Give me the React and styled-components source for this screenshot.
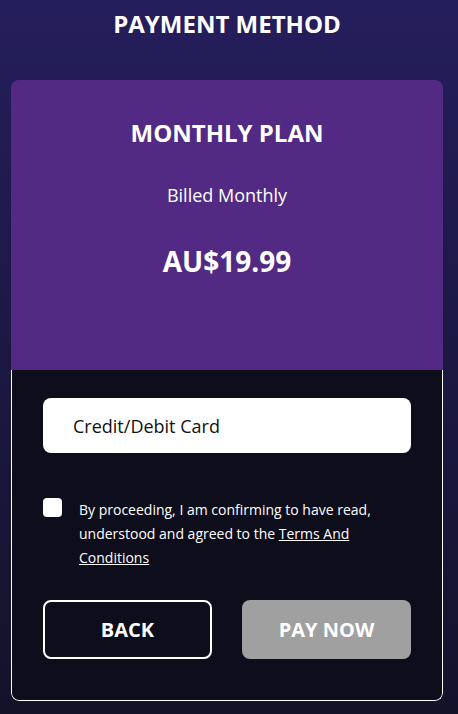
import styled, { createGlobalStyle } from 'styled-components';

const GlobalStyle = createGlobalStyle`
  html, body {
    margin: 0;
    padding: 0;
  }
  body {
    font-family: "Open Sans", "Liberation Sans", sans-serif;
    background: linear-gradient(180deg, #251e5c 0%, #1c1843 50%, #141229 100%);
    min-height: 714px;
    color: #fff;
  }
`;

const Page = styled.div`
  width: 458px;
  min-height: 714px;
  box-sizing: border-box;
  padding: 0 15px 15px 11px;
  display: flex;
  flex-direction: column;
`;

const Heading = styled.h1`
  margin: 0;
  height: 80px;
  padding-top: 7px;
  box-sizing: border-box;
  font-size: 24px;
  font-weight: 700;
  line-height: 34px;
  text-align: center;
`;

const Card = styled.div`
  border-radius: 8px;
  overflow: hidden;
  display: flex;
  flex-direction: column;
`;

const PlanPanel = styled.div`
  background: #522a84;
  height: 290px;
  display: flex;
  flex-direction: column;
  align-items: center;
  padding-top: 37px;
  box-sizing: border-box;
`;

const PlanName = styled.div`
  font-size: 24px;
  font-weight: 700;
  line-height: 32px;
`;

const Billing = styled.div`
  margin-top: 33px;
  font-size: 18px;
  line-height: 26px;
`;

const Price = styled.div`
  margin-top: 34px;
  font-size: 28px;
  font-weight: 700;
  line-height: 38px;
`;

const FormPanel = styled.div`
  background: #0e0d1b;
  border: 1px solid #ffffff;
  border-top: none;
  border-radius: 0 0 8px 8px;
  padding: 28px 31px 41px;
  display: flex;
  flex-direction: column;
`;

const MethodSelect = styled.div`
  background: #fff;
  color: #111;
  height: 55px;
  border-radius: 8px;
  display: flex;
  align-items: center;
  padding-left: 30px;
  font-size: 18px;
`;

const ConsentRow = styled.label`
  margin-top: 47px;
  display: flex;
  gap: 17px;
  align-items: flex-start;
`;

const Box = styled.span`
  flex: none;
  width: 19px;
  height: 19px;
  margin-top: -2px;
  border-radius: 4px;
  background: #fff;
`;

const ConsentText = styled.p`
  margin: -2px 0 0;
  font-size: 14px;
  line-height: 24px;
  color: #fff;
`;

const TermsLink = styled.a`
  color: #fff;
  text-decoration: underline;
`;

const Actions = styled.div`
  margin-top: 30px;
  display: grid;
  grid-template-columns: 1fr 1fr;
  gap: 30px;
`;

const ActionButton = styled.button`
  height: 59px;
  border-radius: 8px;
  font-family: inherit;
  font-size: 20px;
  font-weight: 700;
  color: #fff;
  border: ${p => (p.$outline ? '2px solid #fff' : 'none')};
  background: ${p => (p.$outline ? 'transparent' : '#a0a0a0')};
`;

export default function App() {
  return (
    <Page>
      <GlobalStyle />
      <Heading>PAYMENT METHOD</Heading>
      <Card>
        <PlanPanel>
          <PlanName>MONTHLY PLAN</PlanName>
          <Billing>Billed Monthly</Billing>
          <Price>AU$19.99</Price>
        </PlanPanel>
        <FormPanel>
          <MethodSelect>Credit/Debit Card</MethodSelect>
          <ConsentRow>
            <Box />
            <ConsentText>
              By proceeding, I am confirming to have read, understood and agreed to the{' '}
              <TermsLink href="#">Terms And Conditions</TermsLink>
            </ConsentText>
          </ConsentRow>
          <Actions>
            <ActionButton $outline>BACK</ActionButton>
            <ActionButton disabled>PAY NOW</ActionButton>
          </Actions>
        </FormPanel>
      </Card>
    </Page>
  );
}
